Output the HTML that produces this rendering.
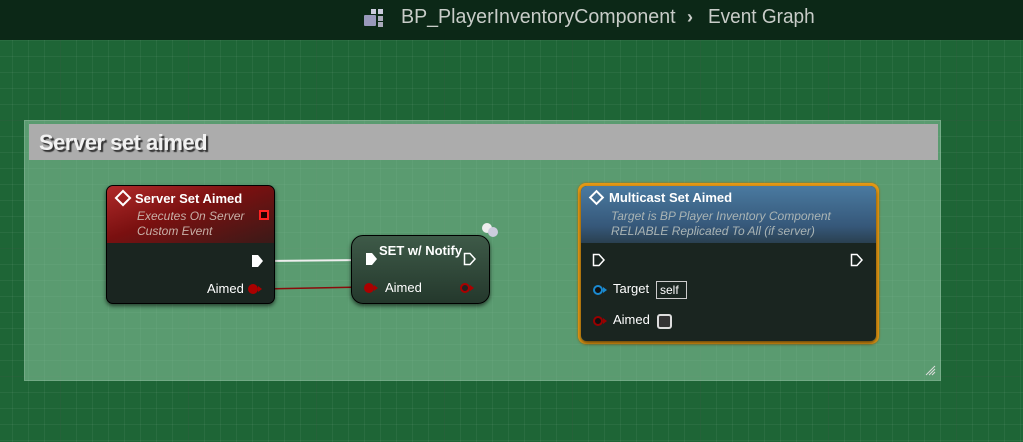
<!DOCTYPE html>
<html><head><meta charset="utf-8"><style>
*{margin:0;padding:0;box-sizing:border-box}
body{width:1023px;height:442px;overflow:hidden;font-family:"Liberation Sans",sans-serif;position:relative;
background-color:#1e6536;
background-image:linear-gradient(rgba(0,0,0,0.1) 1px,transparent 1px),linear-gradient(90deg,rgba(0,0,0,0.1) 1px,transparent 1px),linear-gradient(rgba(255,255,255,0.05) 1px,transparent 1px),linear-gradient(90deg,rgba(255,255,255,0.05) 1px,transparent 1px);
background-size:128px 128px,128px 128px,16px 16px,16px 16px;background-position:-68px -8px,-68px -8px,-4px -8px,-4px -8px}
.top{position:absolute;left:0;top:0;width:1023px;height:40px;background:#0c2817;color:#c8ccc8;font-size:20px}
.top span{position:absolute;top:6px;transform-origin:left;white-space:nowrap}
.cm{position:absolute;left:24px;top:120px;width:917px;height:261px;background:rgba(140,200,160,0.55);border:1px solid rgba(255,255,255,0.15)}
.cmh{position:absolute;left:4px;top:3px;width:909px;height:36px;background:#acacac;color:#f2f2f2;font-weight:bold;font-size:22px;padding:6px 10px;text-shadow:2px 2px 1px #333;letter-spacing:-0.5px}
.node{position:absolute;border-radius:7px;background:#1a2520;box-shadow:0 2px 4px rgba(0,0,0,.6);border:1px solid #000;overflow:hidden}
.hd{color:#fff;font-weight:bold;font-size:13px}
.sub{color:#c8b0a8;font-style:italic;font-size:12px;line-height:15px}
.pl{position:absolute;color:#fff;font-size:13px}
</style></head><body>
<div class="top">
<svg style="position:absolute;left:364px;top:9px" width="24" height="20"><rect x="7" y="0" width="5" height="5" fill="#ccd"/><rect x="14" y="0" width="5" height="5" fill="#ccd"/><rect x="14" y="7" width="5" height="5" fill="#aab"/><rect x="0" y="6" width="12" height="11" fill="#99b" rx="1"/><rect x="14" y="13" width="5" height="5" fill="#aab"/></svg>
<span style="left:401px;transform:scaleX(0.98)">BP_PlayerInventoryComponent</span>
<span style="left:687px;font-weight:bold;font-size:18px;top:7px">›</span>
<span style="left:708px;transform:scaleX(0.95)">Event Graph</span>
</div>
<div class="cm"><div class="cmh">Server set aimed</div>
<svg style="position:absolute;right:4px;bottom:4px" width="12" height="12"><path d="M2 11L11 2M5 11L11 5M8 11L11 8" stroke="#ddd" stroke-width="1"/></svg>
</div>
<svg style="position:absolute;left:0;top:0" width="1023" height="442">
<path d="M264 261 L364 260" stroke="#eee" stroke-width="2"/>
<path d="M262 289 L364 287" stroke="#8a0b0b" stroke-width="1.5"/>
</svg>
<div class="node" style="left:106px;top:185px;width:169px;height:119px">
<div style="height:57px;background:linear-gradient(160deg,#b02a2a 0%,#7a1010 45%,#3a1a18 100%);padding:5px 8px 0 10px">
<div class="hd"><span style="display:inline-block;width:12px;height:12px;border:2px solid #fff;transform:rotate(45deg);margin-right:6px;vertical-align:-1px"></span>Server Set Aimed</div>
<div class="sub" style="margin-left:20px;margin-top:3px">Executes On Server<br>Custom Event</div>
<div style="position:absolute;left:152px;top:24px;width:10px;height:10px;border:2px solid #f22;background:#200"></div>
</div>
<svg style="position:absolute;left:144px;top:68px" width="14" height="14"><path d="M1 1H7L12 7L7 13H1Z" fill="#fff"/></svg>
<div class="pl" style="left:100px;top:95px">Aimed</div>
<svg style="position:absolute;left:140px;top:96px" width="18" height="14"><circle cx="6" cy="7" r="5" fill="#a00"/><path d="M11 4L15 7L11 10Z" fill="#a00"/></svg>
</div>
<div class="node" style="left:351px;top:235px;width:139px;height:69px;background:linear-gradient(#3e5a48,#24382c);border-radius:12px">
<div class="hd" style="position:absolute;left:27px;top:7px">SET w/ Notify</div>
<svg style="position:absolute;left:13px;top:16px" width="14" height="14"><path d="M1 1H7L12 7L7 13H1Z" fill="#fff"/></svg>
<svg style="position:absolute;left:111px;top:16px" width="14" height="14"><path d="M1.5 1.5H7L12 7L7 12.5H1.5Z" fill="none" stroke="#fff" stroke-width="1.5"/></svg>
<svg style="position:absolute;left:11px;top:45px" width="18" height="14"><circle cx="6" cy="7" r="5" fill="#a00"/><path d="M11 4L15 7L11 10Z" fill="#a00"/></svg>
<div class="pl" style="left:33px;top:44px">Aimed</div>
<svg style="position:absolute;left:107px;top:45px" width="18" height="14"><circle cx="6" cy="7" r="4" fill="#222" stroke="#a00" stroke-width="2"/><path d="M11 4L15 7L11 10Z" fill="#a00"/></svg>
</div>
<svg style="position:absolute;left:480px;top:221px" width="22" height="18"><circle cx="7" cy="7" r="5" fill="#eee"/><circle cx="13" cy="11" r="5" fill="#ccd"/></svg>
<div style="position:absolute;left:578px;top:183px;width:301px;height:161px;border:3px solid #e79a14;border-radius:8px;box-shadow:0 0 2px #a60"></div>
<div class="node" style="left:581px;top:186px;width:295px;height:155px;border:none;border-radius:6px">
<div style="height:57px;background:linear-gradient(#4a7aa0,#36587a 70%,#2a4050);padding:4px 8px 0 10px">
<div class="hd"><span style="display:inline-block;width:11px;height:11px;border:2px solid #fff;transform:rotate(45deg);margin-right:7px;vertical-align:-1px"></span>Multicast Set Aimed</div>
<div class="sub" style="margin-left:20px;margin-top:4px;color:#aab4b4">Target is BP Player Inventory Component<br>RELIABLE Replicated To All (if server)</div>
</div>
<svg style="position:absolute;left:11px;top:67px" width="14" height="14"><path d="M1.5 1.5H7L12 7L7 12.5H1.5Z" fill="none" stroke="#fff" stroke-width="1.5"/></svg>
<svg style="position:absolute;left:269px;top:67px" width="14" height="14"><path d="M1.5 1.5H7L12 7L7 12.5H1.5Z" fill="none" stroke="#fff" stroke-width="1.5"/></svg>
<svg style="position:absolute;left:11px;top:97px" width="18" height="14"><circle cx="6" cy="7" r="4" fill="#111" stroke="#1a8ad0" stroke-width="2"/><path d="M11 4L15 7L11 10Z" fill="#1a8ad0"/></svg>
<div class="pl" style="left:32px;top:95px">Target</div>
<div style="position:absolute;left:75px;top:95px;width:31px;height:18px;border:1px solid #ccc;color:#fff;font-size:12px;padding:1px 3px">self</div>
<svg style="position:absolute;left:11px;top:128px" width="18" height="14"><circle cx="6" cy="7" r="4" fill="#111" stroke="#900" stroke-width="2"/><path d="M11 4L15 7L11 10Z" fill="#900"/></svg>
<div class="pl" style="left:32px;top:126px">Aimed</div>
<div style="position:absolute;left:76px;top:128px;width:15px;height:15px;border:2px solid #ddd;border-radius:3px;background:#333"></div>
</div>
</body></html>
